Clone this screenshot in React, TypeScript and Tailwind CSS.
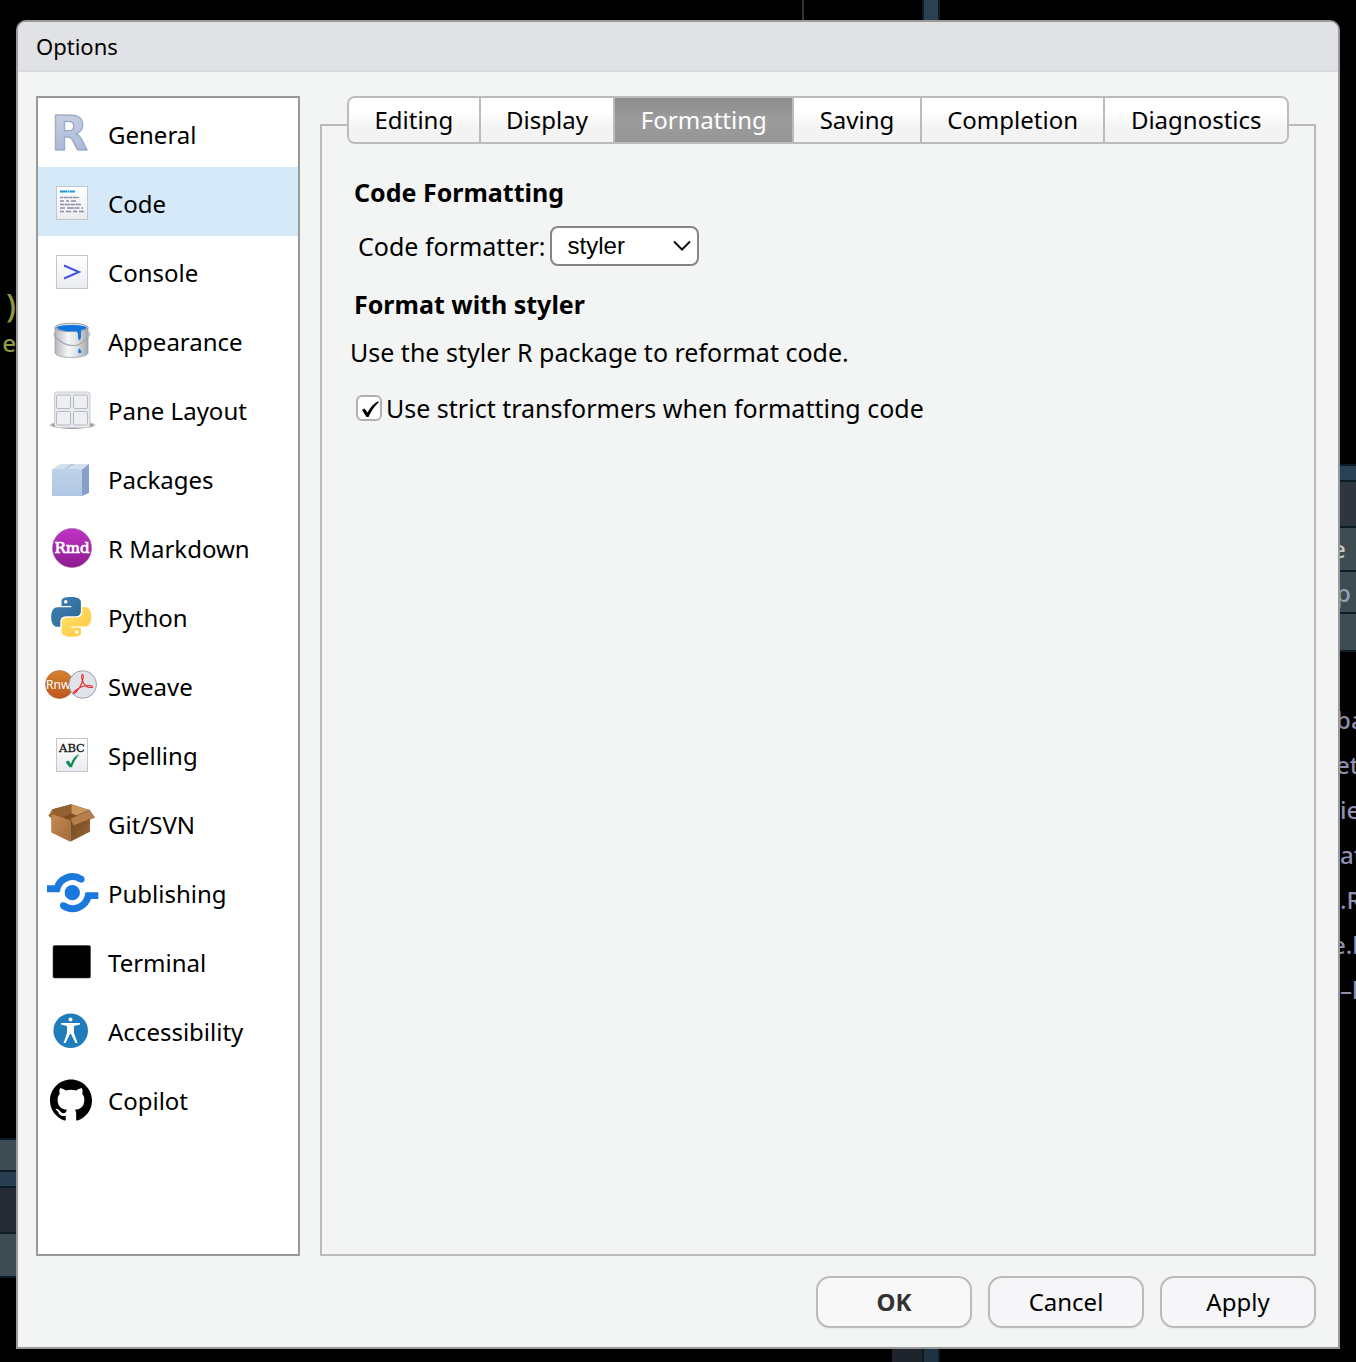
import { useState, type ReactNode } from "react"
import { SiGithub } from "react-icons/si"

const tabs = ["Editing", "Display", "Formatting", "Saving", "Completion", "Diagnostics"]

function Icon({ children }: { children: ReactNode }) {
  return (
    <svg viewBox="0 0 60 47" className="ml-1 h-[47px] w-[60px] shrink-0 overflow-visible" aria-hidden="true">
      {children}
    </svg>
  )
}

function Paper({ children }: { children: ReactNode }) {
  return (
    <>
      <defs>
        <linearGradient id="paper" x2="0" y2="1">
          <stop stopColor="#ffffff" />
          <stop offset="1" stopColor="#e9ecf0" />
        </linearGradient>
      </defs>
      <rect x="14.5" y="8.5" width="31" height="33" fill="url(#paper)" stroke="#c3c7cb" />
      {children}
    </>
  )
}

function GeneralIcon() {
  return (
    <Icon>
      <defs>
        <linearGradient id="r-fill" x2="0" y2="1">
          <stop stopColor="#cbd3e4" />
          <stop offset="1" stopColor="#a6b4d6" />
        </linearGradient>
      </defs>
      <text
        x="9"
        y="41"
        fontFamily="DejaVu Sans, sans-serif"
        fontWeight="700"
        fontSize="48"
        fill="url(#r-fill)"
        stroke="#8f9dba"
      >
        R
      </text>
    </Icon>
  )
}

function CodeIcon() {
  return (
    <Icon>
      <Paper>
        <path d="M18 13.5h15" stroke="#1b9ad6" strokeWidth="2" strokeDasharray="7 .5 2 .5" />
        <g stroke="#8b8fa8" strokeWidth="1.5">
          <path d="M18 19.5h19" strokeDasharray="3 .5 5 .5" />
          <path d="M18 23h16" strokeDasharray="4 2 3 2 5 1" />
          <path d="M18 26.5h21" strokeDasharray="4 .5 6 .5" />
          <path d="M18 30h23" strokeDasharray="5 2 7 .5" />
          <path d="M18 33.5h25" strokeDasharray="4 2 5 2" />
        </g>
      </Paper>
    </Icon>
  )
}

function ConsoleIcon() {
  return (
    <Icon>
      <Paper>
        <path d="M22 18.5l15 6.5-15 6.5" fill="none" stroke="#4654dc" strokeWidth="2" />
      </Paper>
    </Icon>
  )
}

function AppearanceIcon() {
  return (
    <Icon>
      <defs>
        <linearGradient id="bucket">
          <stop stopColor="#b4b7bd" />
          <stop offset=".4" stopColor="#f6f7f9" />
          <stop offset=".65" stopColor="#dfe1e5" />
          <stop offset="1" stopColor="#a4a7ad" />
        </linearGradient>
      </defs>
      <path
        d="M13 12v25c2 6 31 6 33 0V12z"
        fill="url(#bucket)"
        stroke="#9a9da3"
        strokeWidth=".8"
      />
      <ellipse cx="29.5" cy="11.5" rx="16.8" ry="4.2" fill="#dfe3e8" stroke="#85898f" strokeWidth=".8" />
      <path d="M14 11.5c3-3.5 28-3.5 31 0 0 1-2 2-6 2.5v3c0 3 0 7-1.500 7s-1.500-3-1.500-5-.5-3-2-4c-8 1-18-.5-20-3.500z" fill="#0f74dc" />
      <path d="M12.5 17c-2 3 8 12 18 12.5S49 19 47 16" fill="none" stroke="#a2a5ab" strokeWidth="1.2" />
      <path d="M37 32c0 2-2 3.500 0 5 3 1 3-2 1.500-3z" fill="#1b7bdd" />
    </Icon>
  )
}

function PaneIcon() {
  return (
    <Icon>
      <defs>
        <radialGradient id="pane-shadow">
          <stop stopColor="#555" />
          <stop offset=".8" stopColor="#8c8c8c" />
          <stop offset="1" stopColor="#999" stopOpacity="0" />
        </radialGradient>
      </defs>
      <ellipse cx="30.5" cy="40" rx="24" ry="4.2" fill="url(#pane-shadow)" />
      <rect x="12.5" y="7" width="35.5" height="35.5" rx="2.5" fill="#e8eaee" stroke="#c9ccd2" />
      <g fill="#eeeff2" stroke="#b4b8c0">
        <rect x="14.5" y="10" width="14" height="13.5" rx="1.5" />
        <rect x="31.5" y="10" width="14" height="13.5" rx="1.5" />
        <rect x="14.5" y="26.5" width="14" height="13.5" rx="1.5" />
        <rect x="31.5" y="26.5" width="14" height="13.5" rx="1.5" />
      </g>
    </Icon>
  )
}

function PackagesIcon() {
  return (
    <Icon>
      <defs>
        <linearGradient id="pkg" x2="0" y2="1">
          <stop stopColor="#bed2ea" />
          <stop offset="1" stopColor="#b0c6e2" />
        </linearGradient>
      </defs>
      <path d="M10 15.500L18 10h29l-7 5.500z" fill="#d3e0ec" />
      <path d="M24 15.500l8-5.500h-2.500L22 15.500z" fill="#a9c0d9" />
      <path d="M40 15.500L47 10v29l-7 3z" fill="#879fc9" />
      <path d="M10 15h30v27H10z" fill="url(#pkg)" />
    </Icon>
  )
}

function RMarkdownIcon() {
  return (
    <Icon>
      <defs>
        <linearGradient id="rmd" x2="0" y2="1">
          <stop stopColor="#c133c4" />
          <stop offset="1" stopColor="#8d1c90" />
        </linearGradient>
      </defs>
      <circle cx="30" cy="25" r="19.5" fill="url(#rmd)" stroke="#a05ca2" strokeWidth=".6" />
      <text
        x="30"
        y="30"
        textAnchor="middle"
        fontFamily="DejaVu Serif, serif"
        fontSize="15"
        fill="#fff"
        stroke="#fff"
        strokeWidth=".7"
      >
        Rmd
      </text>
    </Icon>
  )
}

function PythonIcon() {
  return (
    <Icon>
      <defs>
        <linearGradient id="py-blue" x2="1" y2="1">
          <stop stopColor="#3d80b4" />
          <stop offset="1" stopColor="#2f6792" />
        </linearGradient>
        <linearGradient id="py-yellow" x2="1" y2="1">
          <stop stopColor="#ffe469" />
          <stop offset="1" stopColor="#ffc544" />
        </linearGradient>
      </defs>
      <g transform="translate(9.3 5) scale(1.66)">
        <path
          fill="url(#py-blue)"
          d="M14.25.18l.9.2.73.26.59.3.45.32.34.34.25.34.16.33.1.3.04.26.02.2-.01.13V8.5l-.05.63-.13.55-.21.46-.26.38-.3.31-.33.25-.35.19-.35.14-.33.1-.3.07-.26.04-.21.02H8.77l-.69.05-.59.14-.5.22-.41.27-.33.32-.27.35-.2.36-.15.37-.1.35-.07.32-.04.27-.02.21v3.06H3.17l-.21-.03-.28-.07-.32-.12-.35-.18-.36-.26-.36-.36-.35-.46-.32-.59-.28-.73-.21-.88-.14-1.05-.05-1.23.06-1.22.16-1.04.24-.87.32-.71.36-.57.4-.44.42-.33.42-.24.4-.16.36-.1.32-.05.24-.01h.16l.06.01h8.16v-.83H6.18l-.01-2.75-.02-.37.05-.34.11-.31.17-.28.25-.26.31-.23.38-.2.44-.18.51-.15.58-.12.64-.1.71-.06.77-.04.84-.02 1.27.05zm-6.3 1.98l-.23.33-.08.41.08.41.23.34.33.22.41.09.41-.09.33-.22.23-.34.08-.41-.08-.41-.23-.33-.33-.22-.41-.09-.41.09z"
        />
        <path
          fill="url(#py-yellow)"
          d="M21.04 6.11l.28.06.32.12.35.18.36.27.36.35.35.47.32.59.28.73.21.88.14 1.04.05 1.23-.06 1.23-.16 1.04-.24.86-.32.71-.36.57-.4.45-.42.33-.42.24-.4.16-.36.09-.32.05-.24.02-.16-.01h-8.22v.82h5.84l.01 2.76.02.36-.05.34-.11.31-.17.29-.25.25-.31.24-.38.2-.44.17-.51.15-.58.13-.64.09-.71.07-.77.04-.84.01-1.27-.04-1.07-.14-.9-.2-.73-.25-.59-.3-.45-.33-.34-.34-.25-.34-.16-.33-.1-.3-.04-.25-.02-.2.01-.13v-5.34l.05-.64.13-.54.21-.46.26-.38.3-.32.33-.24.35-.2.35-.14.33-.1.3-.06.26-.04.21-.02.13-.01h5.84l.69-.05.59-.14.5-.21.41-.28.33-.32.27-.35.2-.36.15-.36.1-.35.07-.32.04-.28.02-.21V6.07h2.09l.14.01zm-6.47 14.25l-.23.33-.08.41.08.41.23.33.33.23.41.08.41-.08.33-.23.23-.33.08-.41-.08-.41-.23-.33-.33-.23-.41-.08-.41.08z"
        />
      </g>
    </Icon>
  )
}

function SweaveIcon() {
  return (
    <Icon>
      <defs>
        <linearGradient id="rnw" x2="0" y2="1">
          <stop stopColor="#d3832f" />
          <stop offset="1" stopColor="#bd571c" />
        </linearGradient>
      </defs>
      <circle cx="17.5" cy="23.5" r="14" fill="url(#rnw)" stroke="#a8693c" strokeWidth=".6" />
      <text x="4" y="27.5" fontFamily="Noto Sans, sans-serif" fontSize="12" fill="#fff">
        Rnw
      </text>
      <circle cx="40.7" cy="23.5" r="13.8" fill="#e1e3e8" stroke="#7f8f9e" strokeWidth=".8" />
      <path
        d="M40.5 13.5c-1.500 1-1 4 .5 7.500 1.500 3.500 4.500 6 9 5.500 1.500-.5 0-2-3-2-5 0-10 2-13.500 5-3 2-2.500 3.500-1 2.500 3-1.500 7-8 8-12 .8-3 1-6 0-6.500z"
        fill="none"
        stroke="#e8262b"
        strokeWidth="1.1"
      />
    </Icon>
  )
}

function SpellingIcon() {
  return (
    <Icon>
      <Paper>
        <text
          x="30"
          y="22"
          textAnchor="middle"
          fontFamily="DejaVu Serif, serif"
          fontSize="11.5"
          fill="#111"
          stroke="#111"
          strokeWidth=".3"
        >
          ABC
        </text>
        <path d="M23.500 32l3-1.500 2.500 3.500c1-4 4-8.500 8.500-10-3 3.500-6 8.500-7.500 13.200h-2.500z" fill="#198754" />
      </Paper>
    </Icon>
  )
}

function BoxIcon() {
  return (
    <Icon>
      <defs>
        <linearGradient id="box-left" x2="1" y2="1">
          <stop stopColor="#c68c57" />
          <stop offset="1" stopColor="#a56a37" />
        </linearGradient>
        <linearGradient id="box-right" x2="1" y2="1">
          <stop stopColor="#6e4520" />
          <stop offset="1" stopColor="#9a6635" />
        </linearGradient>
      </defs>
      <g transform="translate(-6 -149) scale(.333)" strokeLinejoin="round">
        <path d="M50 478l56-15 56 18v20l-59 14-58-22z" fill="#7d4d24" />
        <path d="M106 463l56 18-38 17-18-8z" fill="#cb955e" />
        <path d="M50 478l56-15v27l-26 13-32-12z" fill="#94602f" />
        <path d="M45 491l58 20v65l-57-28z" fill="url(#box-left)" />
        <path d="M103 511l59-21v56l-59 30z" fill="url(#box-right)" />
        <path d="M50 478l-12 20 7 5 8-18z" fill="#a87142" stroke="#875529" strokeWidth="1.5" />
        <path d="M103 506l58-25 15 22-64 25z" fill="#b67f4b" stroke="#7a4a22" strokeWidth="1.5" />
      </g>
    </Icon>
  )
}

function PublishingIcon() {
  return (
    <Icon>
      <g transform="translate(-6 -13) scale(.333)" fill="#1b78dd">
        <circle cx="109" cy="113" r="23" />
        <g fill="none" stroke="#1b78dd" strokeWidth="21">
          <path d="M33 101h30A48 48 0 0 1 136 73" />
          <path d="M187 122h-30A48 48 0 0 1 82 152" />
        </g>
        <circle cx="136" cy="73" r="10" />
        <circle cx="82" cy="152" r="10" />
      </g>
    </Icon>
  )
}

function TerminalIcon() {
  return (
    <Icon>
      <rect x="11" y="8.5" width="37.5" height="32.5" rx="1.5" stroke="#3c3c3c" strokeWidth=".6" />
    </Icon>
  )
}

function AccessibilityIcon() {
  return (
    <Icon>
      <circle cx="28.7" cy="24.7" r="17.3" fill="#217cbc" />
      <circle cx="28.5" cy="13.5" r="2" fill="#fff" />
      <path
        d="M19 17h19v1.500l-6 1.500v7l3.500 10h-2l-4.500-9h-1l-4.500 9h-2l3.500-10v-7l-6-1.500z"
        fill="#fff"
      />
    </Icon>
  )
}

function CopilotIcon() {
  return (
    <Icon>
      <SiGithub x="8" y="4" size={42} />
    </Icon>
  )
}

const sections = [
  { name: "General", icon: <GeneralIcon /> },
  { name: "Code", icon: <CodeIcon /> },
  { name: "Console", icon: <ConsoleIcon /> },
  { name: "Appearance", icon: <AppearanceIcon /> },
  { name: "Pane Layout", icon: <PaneIcon /> },
  { name: "Packages", icon: <PackagesIcon /> },
  { name: "R Markdown", icon: <RMarkdownIcon /> },
  { name: "Python", icon: <PythonIcon /> },
  { name: "Sweave", icon: <SweaveIcon /> },
  { name: "Spelling", icon: <SpellingIcon /> },
  { name: "Git/SVN", icon: <BoxIcon /> },
  { name: "Publishing", icon: <PublishingIcon /> },
  { name: "Terminal", icon: <TerminalIcon /> },
  { name: "Accessibility", icon: <AccessibilityIcon /> },
  { name: "Copilot", icon: <CopilotIcon /> },
]

// slivers of the editor window left visible around the dialog
function LeftEdge() {
  return (
    <div className="w-4 shrink-0 overflow-hidden" aria-hidden="true">
      <div className="flex h-[1118px] flex-col items-end pt-[266px] text-2xl leading-[38px] font-medium text-[#8d9a3f]">
        <span className="text-[32px]">)</span>
        <span>e</span>
      </div>
      <div className="divide-y-2 divide-[#0b1c27] border-y-2 border-[#0b1c27]">
        <div className="h-8 bg-[#3d4b52]" />
        <div className="h-4 bg-[#283e50]" />
        <div className="h-[46px] bg-[#252b32]" />
        <div className="h-[42px] bg-[#3d4b52]" />
      </div>
    </div>
  )
}

function RightEdge() {
  return (
    <div className="w-4 shrink-0 overflow-hidden text-2xl font-medium text-[#8f8fae]" aria-hidden="true">
      <div className="h-[444px]" />
      <div className="divide-y-2 divide-[#0b1c27] border-y-2 border-[#0b1c27] leading-[42px]">
        <div className="h-4 bg-[#2a4055]" />
        <div className="h-[46px] bg-[#2f353d]" />
        <div className="flex h-11 bg-[#3d4b52] text-[#c8c8c0]">
          <span className="-ml-2">e</span>
        </div>
        <div className="flex h-[42px] bg-[#3d4b52] text-[#8fa3b5]">
          <span className="-ml-1">p</span>
        </div>
        <div className="h-9 bg-[#3d4b52]" />
      </div>
      <div className="flex flex-col pt-[45px] leading-[45px] whitespace-nowrap">
        <span className="-ml-1">ba</span>
        <span className="-ml-1">et</span>
        <span>ie</span>
        <span>at</span>
        <span>.R</span>
        <span className="-ml-2">e.l</span>
        <span>–l</span>
      </div>
    </div>
  )
}

export default function App() {
  const [section, setSection] = useState("Code")
  const [tab, setTab] = useState("Formatting")
  const [formatter, setFormatter] = useState("styler")
  const [strict, setStrict] = useState(true)

  return (
    <div className="flex min-h-screen flex-col bg-black font-['Noto_Sans',sans-serif] text-2xl text-black">
      <div className="flex h-5 shrink-0" aria-hidden="true">
        <div className="ml-[802px] w-[2px] bg-[#333]" />
        <div className="ml-[118px] w-[18px] border-x-2 border-[#0b1c27] bg-[#2b4152]" />
      </div>

      <div className="flex flex-1">
        <LeftEdge />

        <div
          role="dialog"
          aria-labelledby="dialog-title"
          className="flex min-w-0 flex-1 flex-col rounded-t-[10px] border-2 border-[#999] bg-[#f3f5f4]"
        >
          <h1
            id="dialog-title"
            className="h-[50px] rounded-t-lg border-b-2 border-[#d8d9de] bg-[#e1e2e6] pl-[18px] text-[22px] leading-[48px]"
          >
            Options
          </h1>

          <div className="flex flex-1 gap-5 pt-6 pr-[22px] pl-[18px]">
            <nav className="w-[264px] shrink-0 border-2 border-[#999] bg-white">
              {sections.map((s) => (
                <button
                  key={s.name}
                  type="button"
                  onClick={() => setSection(s.name)}
                  aria-current={section === s.name}
                  className={`flex h-[69px] w-full items-center text-left ${
                    section === s.name ? "bg-[#d6e9f8]" : ""
                  }`}
                >
                  {s.icon}
                  <span className="pt-1 pl-[6px]">{s.name}</span>
                </button>
              ))}
            </nav>

            <div className="mt-7 min-w-0 flex-1 border-2 border-[#bbb]">
              <div
                role="tablist"
                className="mx-auto -mt-[30px] flex h-12 w-[942px] max-w-full divide-x-2 divide-[#bbb] overflow-hidden rounded-lg border-2 border-[#bbb]"
              >
                {tabs.map((t) => (
                  <button
                    key={t}
                    type="button"
                    role="tab"
                    aria-selected={tab === t}
                    onClick={() => setTab(t)}
                    className={`grow px-6 ${
                      tab === t
                        ? "bg-linear-to-b from-[#8c8c8c] via-[#9c9c9c] to-[#969696] text-white"
                        : "bg-linear-to-b from-white from-30% to-[#f3f3f4] to-70%"
                    }`}
                  >
                    {t}
                  </button>
                ))}
              </div>

              <div className="px-8 pt-8 text-[25px]">
                <h2 className="leading-8 font-bold">Code Formatting</h2>
                <div className="flex items-center gap-1 pt-[18px] pl-1 leading-8">
                  <label htmlFor="formatter">Code formatter:</label>
                  <div className="grid w-[149px] items-center">
                    <select
                      id="formatter"
                      value={formatter}
                      onChange={(e) => setFormatter(e.target.value)}
                      className="col-start-1 row-start-1 h-10 appearance-none rounded-lg border-2 border-[#858585] bg-white pl-4 font-['Liberation_Sans',sans-serif] text-2xl"
                    >
                      <option>styler</option>
                    </select>
                    <svg
                      viewBox="0 0 18 12"
                      className="pointer-events-none col-start-1 row-start-1 mr-2 h-3 w-[18px] justify-self-end"
                      aria-hidden="true"
                    >
                      <path d="M1 1.500l8 8 8-8" fill="none" stroke="#111" strokeWidth="2" />
                    </svg>
                  </div>
                </div>

                <h2 className="pt-[22px] leading-8 font-bold">Format with styler</h2>
                <p className="-ml-1 pt-4 leading-8">Use the styler R package to reformat code.</p>
                <div className="flex items-center gap-1 pt-6 pl-[2px] leading-8">
                  <div className="grid size-[26px] place-items-center">
                    <input
                      id="strict"
                      type="checkbox"
                      checked={strict}
                      onChange={(e) => setStrict(e.target.checked)}
                      className="col-start-1 row-start-1 size-[26px] appearance-none rounded-md border-2 border-[#b0b0b0] bg-white"
                    />
                    {strict && (
                      <svg
                        viewBox="0 0 26 26"
                        className="pointer-events-none col-start-1 row-start-1 size-[26px]"
                        aria-hidden="true"
                      >
                        <path d="M6 15l2.500-1.500 3 4C14 13 17 9 21.500 6.500c1 0 1.500.5 1 1C18.500 11 15 16.500 12.500 22h-2z" />
                      </svg>
                    )}
                  </div>
                  <label htmlFor="strict">Use strict transformers when formatting code</label>
                </div>
              </div>
            </div>
          </div>

          <div className="flex justify-end gap-4 pt-5 pr-[22px] pb-[19px]">
            <button
              type="button"
              className="h-[52px] w-[156px] rounded-[14px] border-2 border-[#bbb] bg-[#f8f8f8] font-bold text-[#333] shadow-xs"
            >
              OK
            </button>
            <button
              type="button"
              className="h-[52px] w-[156px] rounded-[14px] border-2 border-[#bbb] bg-[#f6f6f9] shadow-xs"
            >
              Cancel
            </button>
            <button
              type="button"
              className="h-[52px] w-[156px] rounded-[14px] border-2 border-[#bbb] bg-[#f6f6f9] shadow-xs"
            >
              Apply
            </button>
          </div>
        </div>

        <RightEdge />
      </div>

      <div className="flex h-[13px] shrink-0" aria-hidden="true">
        <div className="ml-[892px] w-[30px] bg-[#1f242c]" />
        <div className="w-[18px] border-x-2 border-[#0b1c27] bg-[#203242]" />
      </div>
    </div>
  )
}
